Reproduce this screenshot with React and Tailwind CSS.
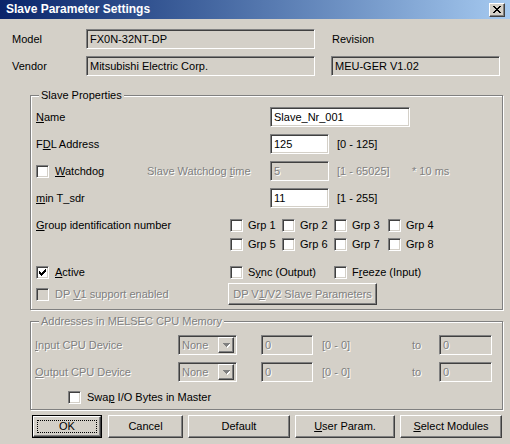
import React from 'react';

const sunken =
  'border border-t-[#808080] border-l-[#808080] border-b-white border-r-white shadow-[inset_1px_1px_0_#404040,inset_-1px_-1px_0_#d4d0c8]';
const raised =
  'border border-t-white border-l-white border-b-[#404040] border-r-[#404040] shadow-[inset_-1px_-1px_0_#808080,inset_1px_1px_0_#d4d0c8]';
const dim = 'text-[#808080] [text-shadow:1px_1px_0_#ffffff]';

const U = ({ children }) => <span className="underline underline-offset-[1px]">{children}</span>;

const Check = ({ checked, disabled }) => (
  <span
    className={`relative block flex-none w-[13px] h-[13px] ${sunken} ${disabled ? 'bg-[#d4d0c8]' : 'bg-white'}`}
  >
    {checked && (
      <svg className="absolute left-[2px] top-[2px]" width="7" height="7" viewBox="0 0 7 7" shapeRendering="crispEdges">
        <path d="M0 2h1v3H0zM1 3h1v3H1zM2 4h1v3H2zM3 3h1v3H3zM4 2h1v3H4zM5 1h1v3H5zM6 0h1v3H6z" fill="#000" />
      </svg>
    )}
  </span>
);

const Edit = ({ value, width, disabled }) => (
  <div
    className={`${sunken} ${width} h-[20px] flex-none flex items-center pl-[3px] ${disabled ? `bg-[#d4d0c8] ${dim}` : 'bg-white'}`}
  >
    {value}
  </div>
);

const Group = ({ title, disabled, className, children }) => (
  <div className={`relative ml-[30px] w-[473px] border border-[#808080] shadow-[inset_1px_1px_0_#fff,1px_1px_0_#fff] ${className}`}>
    <span className={`absolute -top-[7px] left-[8px] bg-[#d4d0c8] px-[2px] ${disabled ? dim : ''}`}>{title}</span>
    {children}
  </div>
);

const Combo = () => (
  <div className={`${sunken} w-[59px] h-[20px] flex-none flex items-center bg-[#d4d0c8] pl-[3px] pr-[2px]`}>
    <span className={`flex-1 ${dim}`}>None</span>
    <span className={`${raised} bg-[#d4d0c8] w-[16px] h-[16px] flex items-center justify-center`}>
      <svg width="7" height="5" viewBox="0 0 7 5" shapeRendering="crispEdges">
        <path d="M1 1h7v1H1zM2 2h5v1H2zM3 3h3v1H3zM4 4h1v1H4z" fill="#fff" />
        <path d="M0 0h7v1H0zM1 1h5v1H1zM2 2h3v1H2zM3 3h1v1H3z" fill="#808080" />
      </svg>
    </span>
  </div>
);

const Button = ({ children, width, isDefault }) =>
  isDefault ? (
    <div className={`${width} h-[23px] border border-black flex-none`}>
      <div className={`relative ${raised} bg-[#d4d0c8] w-full h-full flex items-center justify-center`}>
        <span className="absolute inset-[3px] border border-dotted border-black" />
        {children}
      </div>
    </div>
  ) : (
    <div className={`${raised} bg-[#d4d0c8] ${width} h-[23px] flex-none flex items-center justify-center`}>{children}</div>
  );

export default function App() {
  return (
    <div className="w-[510px] h-[444px] overflow-hidden bg-[#d4d0c8] text-[11px] leading-[13px] text-black font-['Liberation_Sans',Arial,sans-serif]">
      {/* Title bar */}
      <div className="h-[19px] flex items-center justify-between bg-linear-to-r from-[#0a246a] to-[#a6caf0] pl-[6px] pr-[5px]">
        <span className="text-white font-bold text-[12px]">Slave Parameter Settings</span>
        <span className={`${raised} bg-[#d4d0c8] w-[16px] h-[14px] flex items-center justify-center`}>
          <svg width="8" height="7" viewBox="0 0 8 7" shapeRendering="crispEdges">
            <path d="M0 0h2v1H0zM6 0h2v1H6zM1 1h2v1H1zM5 1h2v1H5zM2 2h4v1H2zM3 3h2v1H3zM2 4h4v1H2zM1 5h2v1H1zM5 5h2v1H5zM0 6h2v1H0zM6 6h2v1H6z" fill="#000" />
          </svg>
        </span>
      </div>

      {/* Model / Vendor */}
      <div className="mt-[10px] h-[20px] flex items-center">
        <span className="w-[86px] pl-[12px] flex-none">Model</span>
        <div className={`${sunken} w-[229px] h-[20px] flex items-center pl-[3px] bg-[#d4d0c8]`}>FX0N-32NT-DP</div>
        <span className="ml-[17px]">Revision</span>
      </div>
      <div className="mt-[7px] h-[20px] flex items-center">
        <span className="w-[86px] pl-[12px] flex-none">Vendor</span>
        <div className={`${sunken} w-[229px] h-[20px] flex items-center pl-[3px] bg-[#d4d0c8]`}>Mitsubishi Electric Corp.</div>
        <div className={`${sunken} ml-[16px] w-[169px] h-[20px] flex items-center pl-[3px] bg-[#d4d0c8]`}>MEU-GER V1.02</div>
      </div>

      {/* Slave Properties */}
      <Group title="Slave Properties" className="mt-[19px] h-[215px] pt-[11px] pl-[5px]">
        <div className="h-[20px] flex items-center">
          <span className="w-[234px] flex-none"><U>N</U>ame</span>
          <Edit value="Slave_Nr_001" width="w-[140px]" />
        </div>
        <div className="mt-[7px] h-[20px] flex items-center">
          <span className="w-[234px] flex-none">F<U>D</U>L Address</span>
          <Edit value="125" width="w-[59px]" />
          <span className="ml-[8px]">[0 - 125]</span>
        </div>
        <div className="mt-[7px] h-[20px] flex items-center">
          <div className="w-[111px] flex-none flex items-center gap-[6px]">
            <Check />
            <span><U>W</U>atchdog</span>
          </div>
          <span className={`w-[123px] flex-none ${dim}`}>Slave Watchdog <U>t</U>ime</span>
          <Edit value="5" width="w-[59px]" disabled />
          <span className={`ml-[8px] w-[75px] ${dim}`}>[1 - 65025]</span>
          <span className={dim}>* 10 ms</span>
        </div>
        <div className="mt-[7px] h-[20px] flex items-center">
          <span className="w-[234px] flex-none"><U>m</U>in T_sdr</span>
          <Edit value="11" width="w-[59px]" />
          <span className="ml-[8px]">[1 - 255]</span>
        </div>

        <div className="mt-[8px] flex">
          <span className="w-[194px] h-[19px] flex-none flex items-center"><U>G</U>roup identification number</span>
          <div className="grid grid-cols-[52px_52px_54px_60px]">
            {[1, 2, 3, 4, 5, 6, 7, 8].map((n) => (
              <div key={n} className="h-[19px] flex items-center gap-[5px]">
                <Check />
                <span>Grp {n}</span>
              </div>
            ))}
          </div>
        </div>

        <div className="mt-[9px] h-[19px] flex items-center">
          <div className="w-[194px] flex-none flex items-center gap-[6px]">
            <Check checked />
            <span><U>A</U>ctive</span>
          </div>
          <div className="w-[104px] flex-none flex items-center gap-[5px]">
            <Check />
            <span>S<U>y</U>nc (Output)</span>
          </div>
          <div className="flex items-center gap-[5px]">
            <Check />
            <span>F<U>r</U>eeze (Input)</span>
          </div>
        </div>

        <div className="mt-[1px] h-[22px] flex items-center">
          <div className="w-[192px] flex-none flex items-center gap-[6px]">
            <Check disabled />
            <span className={dim}>DP <U>V</U>1 support enabled</span>
          </div>
          <div className={`${raised} bg-[#d4d0c8] w-[149px] h-[22px] flex items-center justify-center ${dim}`}>
            <span>DP V<U>1</U>/V2 Slave Parameters</span>
          </div>
        </div>
      </Group>

      {/* Addresses */}
      <Group title="Addresses in MELSEC CPU Memory" disabled className="mt-[11px] h-[89px] pt-[13px] pl-[4px]">
        {[['I', 'nput CPU Device'], ['O', 'utput CPU Device']].map(([k, rest], i) => (
          <div key={k} className={`${i ? 'mt-[7px]' : ''} h-[20px] flex items-center`}>
            <span className={`w-[143px] flex-none ${dim}`}><U>{k}</U>{rest}</span>
            <Combo />
            <div className="ml-[24px]"><Edit value="0" width="w-[52px]" disabled /></div>
            <span className={`ml-[9px] w-[90px] flex-none ${dim}`}>[0 - 0]</span>
            <span className={`w-[27px] flex-none ${dim}`}>to</span>
            <Edit value="0" width="w-[53px]" disabled />
          </div>
        ))}
        <div className="mt-[6px] h-[19px] flex items-center gap-[6px] pl-[33px]">
          <Check />
          <span>Swa<U>p</U> I/O Bytes in Master</span>
        </div>
      </Group>

      {/* Buttons */}
      <div className="mt-[5px] ml-[32px] flex gap-[5px]">
        <Button width="w-[70px]" isDefault>OK</Button>
        <div className="ml-[1px]"><Button width="w-[75px]">Cancel</Button></div>
        <Button width="w-[102px]">Default</Button>
        <Button width="w-[100px]"><span><U>U</U>ser Param.</span></Button>
        <Button width="w-[102px]"><span><U>S</U>elect Modules</span></Button>
      </div>
    </div>
  );
}
